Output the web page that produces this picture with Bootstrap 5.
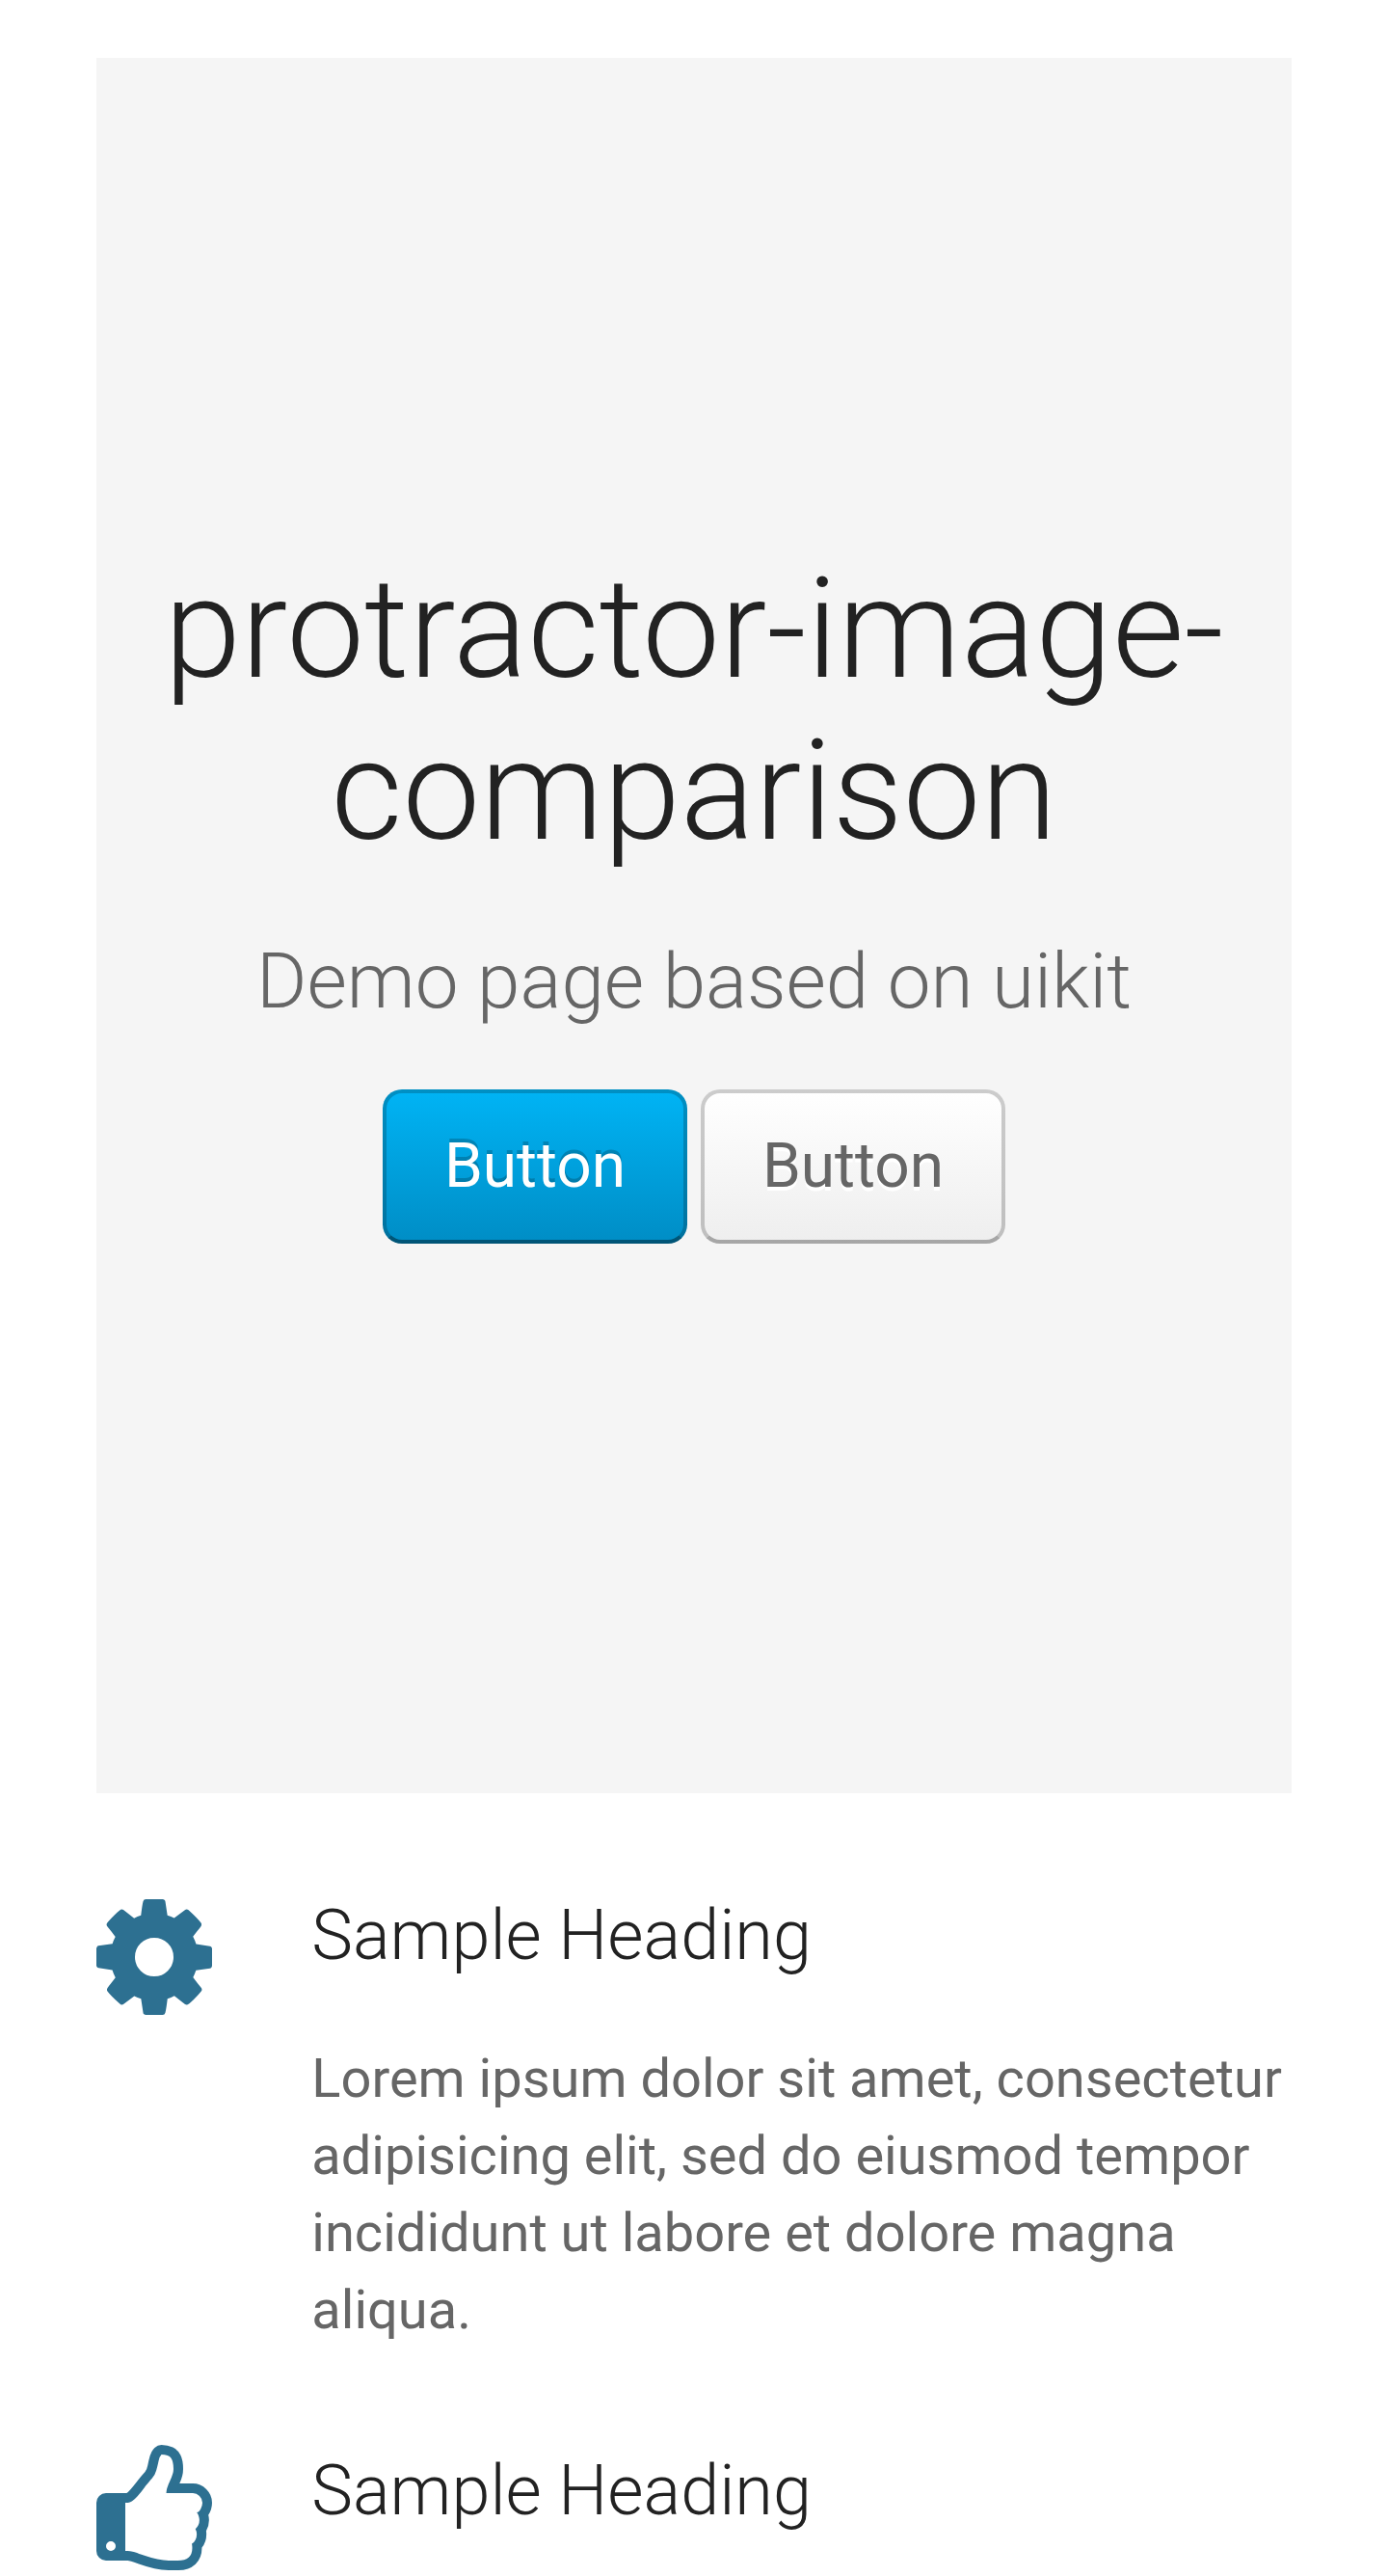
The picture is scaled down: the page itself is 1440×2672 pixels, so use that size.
<!DOCTYPE html>
<html lang="en">
<head>
<meta charset="utf-8">
<title>protractor-image-comparison</title>
<link href="https://cdn.jsdelivr.net/npm/bootstrap@5.3.0/dist/css/bootstrap.min.css" rel="stylesheet">
<style>
body{font-family:Roboto,"Liberation Sans",sans-serif;font-size:56px;line-height:80px;color:#666;background:#fff;height:2672px;overflow:hidden}
.page{padding:60px 100px 0}
.hero{height:1800px;background:#f5f5f5;padding-top:509px}
.hero h1{font-size:144px;line-height:168px;font-weight:300;color:#222;margin:0 0 61px}
.hero .tagline{font-size:80px;line-height:104px;font-weight:300;margin:0 0 60px}
.actions{gap:14px}
.btn-demo{height:160px;width:316px;padding:0;border:4px solid rgba(0,0,0,.2);border-bottom-color:rgba(0,0,0,.4);border-radius:20px;font-size:64px;line-height:152px}
.btn-demo-primary,.btn-demo-primary:hover{color:#fff;background:#009dd8 linear-gradient(to bottom,#00b4f5,#008dc5) border-box;border-color:rgba(0,0,0,.2);border-bottom-color:rgba(0,0,0,.4);text-shadow:0 -4px 0 rgba(0,0,0,.2)}
.btn-demo-plain,.btn-demo-plain:hover{color:#666;background:#f7f7f7 linear-gradient(to bottom,#fff,#eee) border-box;border-color:rgba(0,0,0,.2);border-bottom-color:rgba(0,0,0,.3);text-shadow:0 4px 0 #fff}
.features{padding-top:100px}
.feature{gap:103.33px}
.feature svg{width:120px;fill:#2d7091}
.feature .icon-gear{margin-top:10px}
.feature h2{font-size:72px;line-height:96px;font-weight:300;color:#222;margin:0 0 60px}
.feature p{margin:0}
.feature + .feature{margin-top:100px}
</style>
<script src="https://cdn.jsdelivr.net/npm/bootstrap@5.3.0/dist/js/bootstrap.bundle.min.js"></script>
</head>
<body>
<main class="page">
  <section class="hero text-center">
    <h1>protractor-image-<br>comparison</h1>
    <p class="tagline">Demo page based on uikit</p>
    <div class="actions d-flex justify-content-center">
      <a class="btn btn-demo btn-demo-primary" href="#">Button</a>
      <a class="btn btn-demo btn-demo-plain" href="#">Button</a>
    </div>
  </section>
  <section class="features">
    <article class="feature d-flex align-items-start">
      <svg class="icon-gear flex-shrink-0" viewBox="128 128 1536 1536" height="120" aria-hidden="true"><path d="M1152 896q0-106-75-181t-181-75-181 75-75 181 75 181 181 75 181-75 75-181zm512-109v222q0 12-8 23t-20 13l-185 28q-19 54-39 91 35 50 107 138 10 12 10 25t-9 23q-27 37-99 108t-94 71q-12 0-26-9l-138-108q-44 23-91 38-16 136-29 186-7 28-36 28h-222q-14 0-24.500-8.500t-11.500-21.500l-28-184q-49-16-90-37l-141 107q-10 9-25 9-14 0-25-11-126-114-165-168-7-10-7-23 0-12 8-23 15-21 51-66.500t54-70.500q-27-50-41-99l-183-27q-13-2-21-12.500t-8-23.500v-222q0-12 8-23t19-13l186-28q14-46 39-92-40-57-107-138-10-12-10-24 0-10 9-23 26-36 98.500-107.500t94.500-71.500q13 0 26 10l138 107q44-23 91-38 16-136 29-186 7-28 36-28h222q14 0 24.500 8.500t11.500 21.500l28 184q49 16 90 37l142-107q9-9 24-9 13 0 25 10 129 119 165 170 7 8 7 22 0 12-8 23-15 21-51 66.500t-54 70.500q26 50 41 98l183 28q13 2 21 12.500t8 23.500z"/></svg>
      <div class="flex-grow-1">
        <h2>Sample Heading</h2>
        <p>Lorem ipsum dolor sit amet, consectetur<br>adipisicing elit, sed do eiusmod tempor<br>incididunt ut labore et dolore magna<br>aliqua.</p>
      </div>
    </article>
    <article class="feature d-flex align-items-start">
      <svg class="flex-shrink-0" viewBox="128 0 1536 1664" height="130" aria-hidden="true"><path d="M384 1344q0-26-19-45t-45-19-45 19-19 45 19 45 45 19 45-19 19-45zm1152-576q0-51-39-89.500t-89-38.500h-352q0-58 48-159.500t48-160.500q0-98-32-145t-128-47q-26 26-38 85t-30.500 125.500-59.500 109.500q-22 23-77 91-4 5-23 30t-31.500 41-34.500 42.500-40 44-38.500 35.500-40 27-35.500 9h-32v640h32q13 0 31.500 3t33 6.500 38 11 35 11.500 35.500 12.500 29 10.500q211 73 342 73h121q192 0 192-167 0-26-5-56 30-16 47.500-52.500t17.500-73.500-18-69q53-50 53-119 0-25-10-55.500t-25-47.500q32-1 53.500-47t21.500-81zm128-1q0 89-49 163 9 33 9 69 0 77-38 144 3 21 3 43 0 101-60 178 1 139-85 219.500t-227 80.500h-129q-96 0-189.500-22.500t-216.500-65.500q-116-40-138-40h-288q-53 0-90.500-37.500t-37.500-90.500v-640q0-53 37.500-90.500t90.500-37.500h274q36-24 137-155 58-75 107-128 24-25 35.500-85.500t30.500-126.500 62-108q39-37 90-37 84 0 151 32.500t102 101.500 35 186q0 93-48 192h176q104 0 180 76t76 179z"/></svg>
      <div class="flex-grow-1">
        <h2>Sample Heading</h2>
      </div>
    </article>
  </section>
</main>
</body>
</html>
